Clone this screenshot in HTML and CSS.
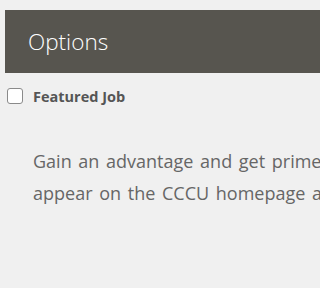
FILE: index.html
```html
<!DOCTYPE html>
<html>
<head>
<meta charset="utf-8">
<link rel="stylesheet" href="styles.css">
</head>
<body>
<section class="options">
  <h2 class="options-title">Options</h2>
  <label class="option-row">
    <span class="checkbox"></span>
    <span class="option-label">Featured Job</span>
  </label>
  <p class="option-desc">Gain an advantage and get prime placement for your job listing. Featured jobs<br>appear on the CCCU homepage and at the top of search results.</p>
</section>
</body>
</html>
```
FILE: styles.css
```css
html, body {
  margin: 0;
  padding: 0;
  background: #f0f0f0;
  overflow: hidden;
}
.options {
  width: 800px;
  padding: 10px 0 0 5px;
  font-family: "Open Sans", "Liberation Sans", sans-serif;
}
.options-title {
  margin: 0;
  height: 63px;
  background: #57554f;
  color: #ffffff;
  font-weight: 300;
  font-size: 22.5px;
  line-height: 63px;
  padding-left: 23px;
  box-sizing: border-box;
}
.option-row {
  display: flex;
  align-items: center;
  margin-top: 15px;
  height: 16px;
}
.checkbox {
  width: 14px;
  height: 14px;
  margin-left: 2px;
  border: 1px solid #8a8a8a;
  border-radius: 3px;
  background: #ffffff;
}
.option-label {
  margin-left: 10px;
  font-size: 14.5px;
  font-weight: 700;
  color: #555555;
}
.option-desc {
  margin: 41px 0 0 28px;
  font-size: 18px;
  line-height: 32px;
  word-spacing: 2px;
  color: #666666;
  white-space: nowrap;
}
```
